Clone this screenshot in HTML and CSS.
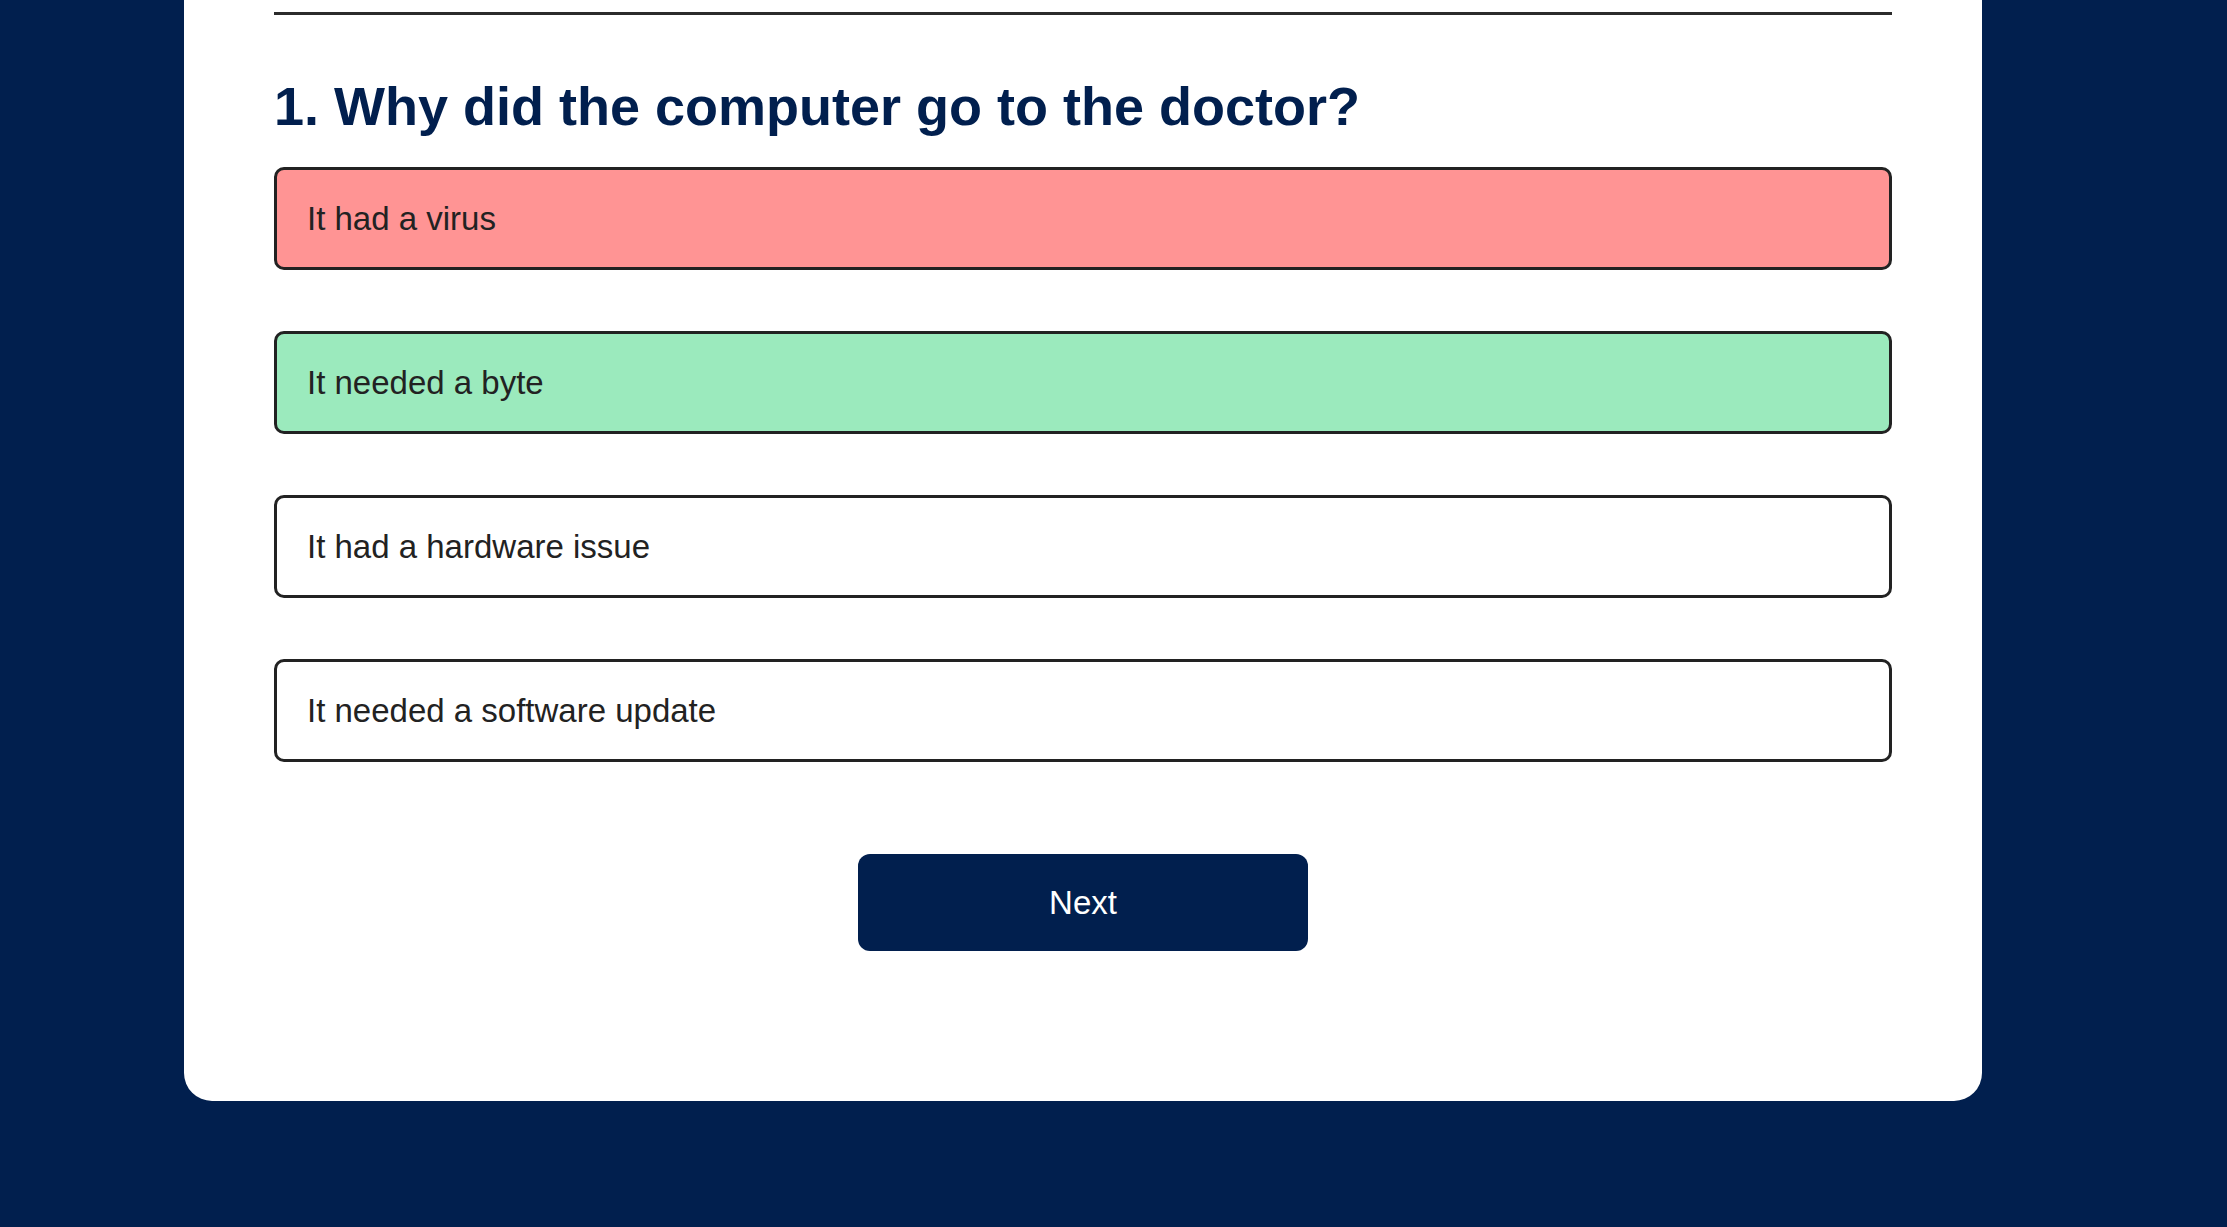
FILE: index.html
```html
<!DOCTYPE html>
<html lang="en">
<head>
<meta charset="utf-8">
<title>Quiz</title>
<link rel="stylesheet" href="styles.css">
</head>
<body>
  <main class="card">
    <hr class="divider">
    <h2 class="question">1. Why did the computer go to the doctor?</h2>
    <ul class="options">
      <li class="option option-wrong">It had a virus</li>
      <li class="option option-right">It needed a byte</li>
      <li class="option">It had a hardware issue</li>
      <li class="option">It needed a software update</li>
    </ul>
    <div class="actions">
      <button class="next-btn" type="button">Next</button>
    </div>
  </main>
</body>
</html>
```

FILE: styles.css
```css
html, body {
  margin: 0;
  padding: 0;
}

body {
  background: #011f4e;
  font-family: "Liberation Sans", Arial, Helvetica, sans-serif;
  min-height: 1227px;
}

.card {
  width: 1798px;
  margin-left: 184px;
  box-sizing: border-box;
  background: #ffffff;
  padding: 12px 90px 150px;
  border-radius: 0 0 28px 28px;
}

.divider {
  margin: 0;
  border: 0;
  height: 3px;
  background: #2b2b2b;
}

.question {
  margin: 60px 0 30px;
  font-size: 54px;
  font-weight: 700;
  line-height: 62px;
  color: #011f4e;
}

.options {
  list-style: none;
  margin: 0;
  padding: 0;
  display: flex;
  flex-direction: column;
  gap: 61px;
}

.option {
  border: 3px solid #222222;
  border-radius: 10px;
  padding: 29px 30px;
  font-size: 33px;
  line-height: 39px;
  color: #222222;
  background: #ffffff;
}

.option-wrong {
  background: #ff9494;
}

.option-right {
  background: #9beabd;
}

.actions {
  display: flex;
  justify-content: center;
  margin-top: 92px;
}

.next-btn {
  width: 450px;
  height: 97px;
  border: 0;
  border-radius: 12px;
  background: #011f4e;
  color: #ffffff;
  font-family: "Liberation Sans", Arial, Helvetica, sans-serif;
  font-size: 33px;
  cursor: pointer;
}
```
